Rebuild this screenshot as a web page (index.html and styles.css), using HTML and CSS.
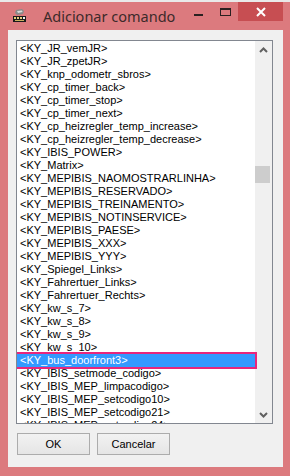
FILE: index.html
```html
<!DOCTYPE html>
<html>
<head>
	<meta charset="utf-8">
	<title>Adicionar comando</title>
	<link rel="stylesheet" href="styles.css">
</head>
<body>
	<div class="topstrip"></div>
	<div class="window">
		<div class="titlebar">
			<svg class="appicon" width="16" height="16" viewBox="0 0 16 16">
				<path d="M4 2 L10 1 L12 3 L11 6 L5 7 L3 5 Z" fill="#8a8a8a"/>
				<path d="M5 3 L10 2.5 L10.5 4 L6 5 Z" fill="#d8d8d8"/>
				<rect x="1" y="8" width="13" height="6" fill="#1a1a1a"/>
				<rect x="2" y="9" width="2" height="2" fill="#e8d080"/>
				<rect x="5" y="9" width="2" height="2" fill="#e8d080"/>
				<rect x="8" y="9" width="2" height="2" fill="#e8d080"/>
				<rect x="3" y="12" width="9" height="1" fill="#c9b060"/>
				<rect x="11" y="9" width="2" height="2" fill="#f4f4f4"/>
			</svg>
			<span class="title">Adicionar comando</span>
			<div class="caption-btns">
				<span class="cap-min"></span>
				<span class="cap-max"></span>
				<span class="cap-close">
					<svg width="10" height="10" viewBox="0 0 10 10">
						<path d="M1 1 L9 9 M9 1 L1 9" stroke="#fff" stroke-width="2"/>
					</svg>
				</span>
			</div>
		</div>
		<div class="client">
			<div class="listbox">
				<ul class="items">
					<li>&lt;KY_JR_vemJR&gt;</li>
					<li>&lt;KY_JR_zpetJR&gt;</li>
					<li>&lt;KY_knp_odometr_sbros&gt;</li>
					<li>&lt;KY_cp_timer_back&gt;</li>
					<li>&lt;KY_cp_timer_stop&gt;</li>
					<li>&lt;KY_cp_timer_next&gt;</li>
					<li>&lt;KY_cp_heizregler_temp_increase&gt;</li>
					<li>&lt;KY_cp_heizregler_temp_decrease&gt;</li>
					<li>&lt;KY_IBIS_POWER&gt;</li>
					<li>&lt;KY_Matrix&gt;</li>
					<li>&lt;KY_MEPIBIS_NAOMOSTRARLINHA&gt;</li>
					<li>&lt;KY_MEPIBIS_RESERVADO&gt;</li>
					<li>&lt;KY_MEPIBIS_TREINAMENTO&gt;</li>
					<li>&lt;KY_MEPIBIS_NOTINSERVICE&gt;</li>
					<li>&lt;KY_MEPIBIS_PAESE&gt;</li>
					<li>&lt;KY_MEPIBIS_XXX&gt;</li>
					<li>&lt;KY_MEPIBIS_YYY&gt;</li>
					<li>&lt;KY_Spiegel_Links&gt;</li>
					<li>&lt;KY_Fahrertuer_Links&gt;</li>
					<li>&lt;KY_Fahrertuer_Rechts&gt;</li>
					<li>&lt;KY_kw_s_7&gt;</li>
					<li>&lt;KY_kw_s_8&gt;</li>
					<li>&lt;KY_kw_s_9&gt;</li>
					<li>&lt;KY_kw_s_10&gt;</li>
					<li class="selected">&lt;KY_bus_doorfront3&gt;</li>
					<li>&lt;KY_IBIS_setmode_codigo&gt;</li>
					<li>&lt;KY_IBIS_MEP_limpacodigo&gt;</li>
					<li>&lt;KY_IBIS_MEP_setcodigo10&gt;</li>
					<li>&lt;KY_IBIS_MEP_setcodigo21&gt;</li>
					<li>&lt;KY_IBIS_MEP_setcodigo24&gt;</li>
				</ul>
				<div class="scrollbar">
					<span class="arrow">
						<svg width="9" height="6" viewBox="0 0 9 6"><path d="M1 5 L4.5 1.5 L8 5" fill="none" stroke="#606060" stroke-width="2"/></svg>
					</span>
					<div class="track">
						<div class="thumb"></div>
					</div>
					<span class="arrow">
						<svg width="9" height="6" viewBox="0 0 9 6"><path d="M1 1 L4.5 4.5 L8 1" fill="none" stroke="#606060" stroke-width="2"/></svg>
					</span>
				</div>
			</div>
			<div class="buttons">
				<button class="btn">OK</button>
				<button class="btn">Cancelar</button>
			</div>
		</div>
	</div>
</body>
</html>
```
FILE: styles.css
```css
*{
	box-sizing: border-box;
}
body{
	margin: 0;
	background: #ececec;
	font-family: "Liberation Sans", Arial, sans-serif;
	width: 290px;
	height: 476px;
	overflow: hidden;
}
.topstrip{
	height: 2px;
	background: #e9e9e9;
}
.window{
	background: #dc7a7e;
	padding: 0 7px 9px 8px;
	height: 474px;
}
.titlebar{
	height: 28px;
	display: flex;
	align-items: flex-start;
	position: relative;
}
.appicon{
	margin: 6px 0 0 4px;
}
.title{
	font-family: "Noto Sans", "Open Sans", sans-serif;
	font-size: 14.5px;
	color: #3c2a2a;
	margin: 4px 0 0 15px;
}
.caption-btns{
	margin-left: auto;
	display: flex;
	align-items: flex-start;
}
.cap-min{
	width: 9px;
	height: 2px;
	background: #2a2020;
	margin: 12px 17px 0 0;
}
.cap-max{
	width: 11px;
	height: 8px;
	border: 1px solid #2a2020;
	border-top-width: 2px;
	margin: 6px 7px 0 0;
}
.cap-close{
	width: 45px;
	height: 19px;
	background: #c74e52;
	display: flex;
	align-items: center;
	justify-content: center;
}
.client{
	background: #f0f0f0;
	height: 437px;
	padding: 10px 0 0 8px;
}
.listbox{
	width: 257px;
	height: 384px;
	border: 1px solid #828790;
	background: #fff;
	display: flex;
	overflow: hidden;
}
.items{
	list-style: none;
	margin: 0;
	padding: 1px 0 0 0;
	flex: 1;
	font-size: 11px;
	color: #000;
}
.items li{
	height: 13px;
	line-height: 13px;
	padding-left: 3px;
	white-space: nowrap;
}
.items li.selected{
	background: #3399ff;
	color: #fff;
	position: relative;
}
.items li.selected::after{
	content: "";
	position: absolute;
	left: -3px;
	right: -2px;
	top: -2px;
	bottom: -2px;
	border: 2px solid #e8267c;
}
.scrollbar{
	width: 17px;
	background: #f0f0f0;
	display: flex;
	flex-direction: column;
}
.arrow{
	height: 17px;
	display: flex;
	align-items: center;
	justify-content: center;
}
.track{
	flex: 1;
	padding-top: 108px;
}
.thumb{
	height: 17px;
	width: 15px;
	background: #cdcdcd;
}
.buttons{
	display: flex;
	gap: 7px;
	margin: 9px 0 0 1px;
}
.btn{
	width: 73px;
	height: 22px;
	border: 1px solid #acacac;
	background: linear-gradient(#f2f2f2, #e5e5e5);
	font-family: "Liberation Sans", Arial, sans-serif;
	font-size: 11px;
	color: #000;
	padding: 0;
}
```
